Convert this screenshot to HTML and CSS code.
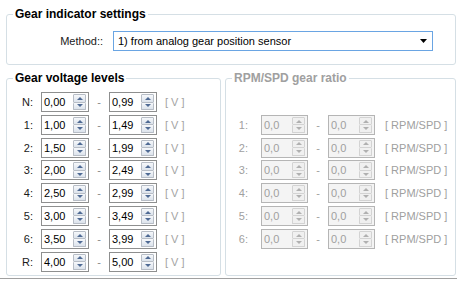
FILE: index.html
```html
<html lang="en">
<head>
    <meta charset="UTF-8">
    <title>Gear indicator settings</title>
    <link rel="stylesheet" href="styles.css">
</head>
<body>
    <div class="form">
        <fieldset class="group group-settings">
            <legend>Gear indicator settings</legend>
            <div class="method-row">
                <label class="method-label">Method::</label>
                <div class="combo">
                    <span class="combo-text">1) from analog gear position sensor</span>
                    <svg class="combo-arrow" width="7" height="4" viewBox="0 0 7 4"><path d="M0 0H7L3.5 4Z" fill="#000"/></svg>
                </div>
            </div>
        </fieldset>

        <div class="groups">
            <fieldset class="group group-volt">
                <legend>Gear voltage levels</legend>
                <div class="rows" id="voltRows"></div>
            </fieldset>

            <fieldset class="group group-ratio" disabled>
                <legend>RPM/SPD gear ratio</legend>
                <div class="rows" id="ratioRows"></div>
            </fieldset>
        </div>
    </div>
    <div class="bottom-line"></div>

    <script>
        const voltLevels = [
            ['N', '0,00', '0,99'],
            ['1', '1,00', '1,49'],
            ['2', '1,50', '1,99'],
            ['3', '2,00', '2,49'],
            ['4', '2,50', '2,99'],
            ['5', '3,00', '3,49'],
            ['6', '3,50', '3,99'],
            ['R', '4,00', '5,00']
        ];

        function spinBox(value) {
            return `
                <div class="spin">
                    <span class="spin-value">${value}</span>
                    <span class="spin-btns"><span class="spin-up"></span><span class="spin-down"></span></span>
                </div>`;
        }

        function gearRow(gear, from, to, unit) {
            return `
                <div class="row">
                    <span class="gear">${gear}:</span>
                    ${spinBox(from)}
                    <span class="dash">-</span>
                    ${spinBox(to)}
                    <span class="unit">${unit}</span>
                </div>`;
        }

        // Voltage levels for every gear
        document.getElementById('voltRows').innerHTML = voltLevels
            .map(level => gearRow(level[0], level[1], level[2], '[ V ]'))
            .join('');

        // Ratio rows (disabled in analog mode)
        let ratioHtml = '';
        for (let gear = 1; gear <= 6; gear++) {
            ratioHtml += gearRow(gear, '0,0', '0,0', '[ RPM/SPD ]');
        }
        document.getElementById('ratioRows').innerHTML = ratioHtml;
    </script>
</body>
</html>
```

FILE: styles.css
```css
body {
    margin: 0;
    background-color: #fff;
    font-family: "Liberation Sans", Arial, sans-serif;
    font-size: 11px;
    color: #1a1a1a;
}
.form {
    padding: 6px 1px 0 6px;
}

/* Group boxes */
.group {
    margin: 0;
    padding: 0;
    border: 1px solid #d5dfe5;
    border-radius: 3px;
    min-width: 0;
}
.group legend {
    margin-left: 6px;
    padding: 0 2px;
    font-size: 12px;
    font-weight: bold;
    line-height: 16px;
    color: #000;
}
.group-ratio legend {
    color: #a0a0a0;
}

/* Method selector */
.method-row {
    display: flex;
    align-items: center;
    padding: 9px 0 13px;
}
.method-label {
    width: 96px;
    margin-right: 10px;
    text-align: right;
}
.combo {
    width: 320px;
    height: 20px;
    box-sizing: border-box;
    border: 1px solid #6aa5e3;
    background: #fff;
    display: flex;
    align-items: center;
    padding: 0 5px 0 4px;
}
.combo-text {
    flex: 1;
    color: #000;
}

/* Lower groups */
.groups {
    display: flex;
    gap: 4px;
    margin-top: 5px;
}
.group-volt {
    width: 215px;
    box-sizing: border-box;
}
.group-ratio {
    flex: 1;
}
.rows {
    display: flex;
    flex-direction: column;
    gap: 2.8px;
    padding: 6px 0 3px;
}
.group-ratio .rows {
    padding-top: 28.8px;
}
.row {
    display: flex;
    align-items: center;
    height: 20px;
}
.gear {
    width: 26px;
    margin-right: 8px;
    text-align: right;
}
.group-ratio .gear {
    width: 22px;
    margin-right: 13px;
}
.dash {
    width: 20px;
    text-align: center;
    color: #888;
}
.unit {
    margin-left: 8px;
    color: #a3a3a3;
}
.group-ratio .unit {
    margin-left: 10px;
}

/* Numeric up/down */
.spin {
    display: flex;
    width: 48px;
    height: 20px;
    box-sizing: border-box;
    border: 1px solid #8e8f8f;
    background: #fff;
    padding: 1px 2px 1px 1px;
}
.group-ratio .spin {
    width: 47px;
    border-color: #b5b5b5;
    background: #f4f4f4;
}
.spin-value {
    flex: 1;
    line-height: 16px;
    padding-left: 1px;
    color: #000;
}
.group-ratio .spin-value {
    color: #a0a0a0;
}
.spin-btns {
    width: 13px;
    display: flex;
    flex-direction: column;
}
.spin-up, .spin-down {
    flex: 1;
    display: flex;
    align-items: center;
    justify-content: center;
    border: 1px solid #b7bdc6;
    border-radius: 1px;
    background: linear-gradient(#f6f8fb, #dce3ec);
}
.spin-down {
    border-top: none;
}
.spin-up::before, .spin-down::before {
    content: "";
    border-left: 3px solid transparent;
    border-right: 3px solid transparent;
}
.spin-up::before {
    border-bottom: 3px solid #4f6a94;
}
.spin-down::before {
    border-top: 3px solid #4f6a94;
}
.group-ratio .spin-up, .group-ratio .spin-down {
    border-color: #d3d3d3;
    background: #f0f0f0;
}
.group-ratio .spin-up::before {
    border-bottom-color: #b0b0b0;
}
.group-ratio .spin-down::before {
    border-top-color: #b0b0b0;
}
.group-ratio .gear, .group-ratio .dash, .group-ratio .unit {
    color: #a0a0a0;
}

.bottom-line {
    margin-top: 2px;
    border-top: 1px solid #a0a0a0;
}
```
